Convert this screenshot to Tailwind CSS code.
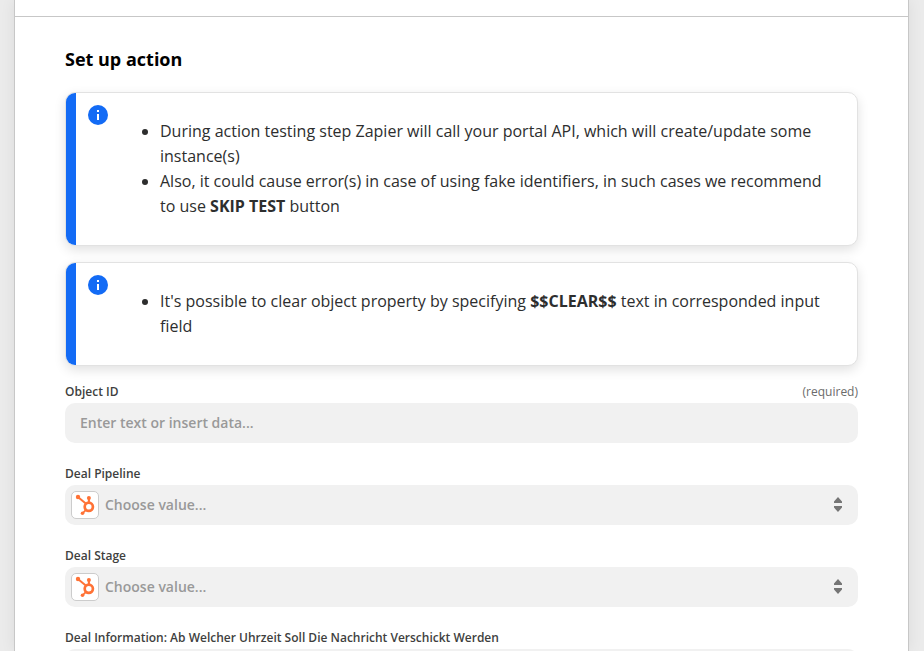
<!DOCTYPE html>
<html lang="en">
<head>
    <meta charset="UTF-8">
    <meta name="viewport" content="width=device-width, initial-scale=1.0">
    <title>Set up action</title>
    <script src="https://cdn.jsdelivr.net/npm/@tailwindcss/browser@4"></script>
</head>
<body class="h-screen overflow-hidden bg-[#ebebeb] font-['Open_Sans',sans-serif] text-[#2d2e2e]">

    <!-- Shared icons -->
    <svg class="hidden">
        <symbol id="info" viewBox="0 0 20 20">
            <circle cx="10" cy="10" r="10" fill="#136bf5"/>
            <path d="M9 5h2v2H9zM9 9h2v6H9z" fill="#fff"/>
        </symbol>
        <symbol id="hubspot" viewBox="0 0 28 28">
            <g fill="none" stroke="#ff7236">
                <path d="M7.2 6.2L14.8 12.4" stroke-width="2"/>
                <path d="M17.9 7.5V12" stroke-width="2.1"/>
                <path d="M15 18.8L12 21.8" stroke-width="1.7"/>
                <circle cx="17.8" cy="15.8" r="4.1" stroke-width="2.7"/>
            </g>
            <g fill="#ff7236">
                <circle cx="7" cy="6" r="2.2"/>
                <circle cx="17.9" cy="7" r="2"/>
                <circle cx="11.5" cy="22.2" r="1.8"/>
            </g>
        </symbol>
        <symbol id="sort" viewBox="0 0 8 15">
            <path d="M4 0L8 4.4V6H0V4.4zM4 15L0 10.6V9H8V10.6z" fill="#757575"/>
        </symbol>
    </svg>

    <div class="ml-[14px] flex h-full w-[895px] flex-col overflow-hidden border-x border-[#c7c7c7] bg-white shadow-[0_0_14px_rgba(0,0,0,0.07)]">
        <div class="h-[17px] shrink-0 border-b border-[#c7c7c7]"></div>

        <div class="px-[50px] pt-[29px]">
            <h1 class="h-[46px] text-lg leading-[26px] font-bold text-black">Set up action</h1>

            <!-- Notices -->
            <div class="flex flex-col gap-4">
                <div class="flex overflow-hidden rounded-[10px] border border-[#e2e2e2] bg-white shadow-[0_4px_12px_rgba(0,0,0,0.12)]">
                    <div class="w-[10px] shrink-0 bg-[#136bf5]"></div>
                    <svg class="mt-3 ml-3 size-5 shrink-0"><use href="#info"/></svg>
                    <ul class="my-[26px] ml-[52px] w-[670px] list-disc text-base leading-[25px]">
                        <li>During action testing step Zapier will call your portal API, which will create/update some<br>instance(s)</li>
                        <li>Also, it could cause error(s) in case of using fake identifiers, in such cases we recommend<br>to use <b>SKIP TEST</b> button</li>
                    </ul>
                </div>
                <div class="flex overflow-hidden rounded-[10px] border border-[#e2e2e2] bg-white shadow-[0_4px_12px_rgba(0,0,0,0.12)]">
                    <div class="w-[10px] shrink-0 bg-[#136bf5]"></div>
                    <svg class="mt-3 ml-3 size-5 shrink-0"><use href="#info"/></svg>
                    <ul class="my-[26px] ml-[52px] w-[670px] list-disc text-base leading-[25px]">
                        <li>It's possible to clear object property by specifying <b>$$CLEAR$$</b> text in corresponded input<br>field</li>
                    </ul>
                </div>
            </div>

            <!-- Fields -->
            <div class="mt-[15px] flex flex-col gap-5 text-xs leading-[22px] font-semibold text-[#403f3e]">
                <div>
                    <div class="flex justify-between">
                        <span>Object ID</span>
                        <span class="font-normal text-[#6b6b6b]">(required)</span>
                    </div>
                    <div class="flex h-10 items-center rounded-[10px] bg-[#f1f1f1] px-[15px] text-sm text-[#999]">Enter text or insert data...</div>
                </div>
                <div>
                    <div>Deal Pipeline</div>
                    <div class="flex h-10 items-center rounded-[10px] bg-[#f1f1f1] pr-4 pl-[6px] text-sm text-[#999]">
                        <span class="mr-[6px] size-7 rounded-[5px] border border-[#ccc] bg-white"><svg class="-m-px size-7"><use href="#hubspot"/></svg></span>
                        <span>Choose value...</span>
                        <svg class="mb-px ml-auto h-[15px] w-2"><use href="#sort"/></svg>
                    </div>
                </div>
                <div>
                    <div>Deal Stage</div>
                    <div class="flex h-10 items-center rounded-[10px] bg-[#f1f1f1] pr-4 pl-[6px] text-sm text-[#999]">
                        <span class="mr-[6px] size-7 rounded-[5px] border border-[#ccc] bg-white"><svg class="-m-px size-7"><use href="#hubspot"/></svg></span>
                        <span>Choose value...</span>
                        <svg class="mb-px ml-auto h-[15px] w-2"><use href="#sort"/></svg>
                    </div>
                </div>
                <div>
                    <div>Deal Information: Ab Welcher Uhrzeit Soll Die Nachricht Verschickt Werden</div>
                    <div class="h-10 rounded-[10px] bg-[#f1f1f1]"></div>
                </div>
            </div>
        </div>
    </div>

</body>
</html>
